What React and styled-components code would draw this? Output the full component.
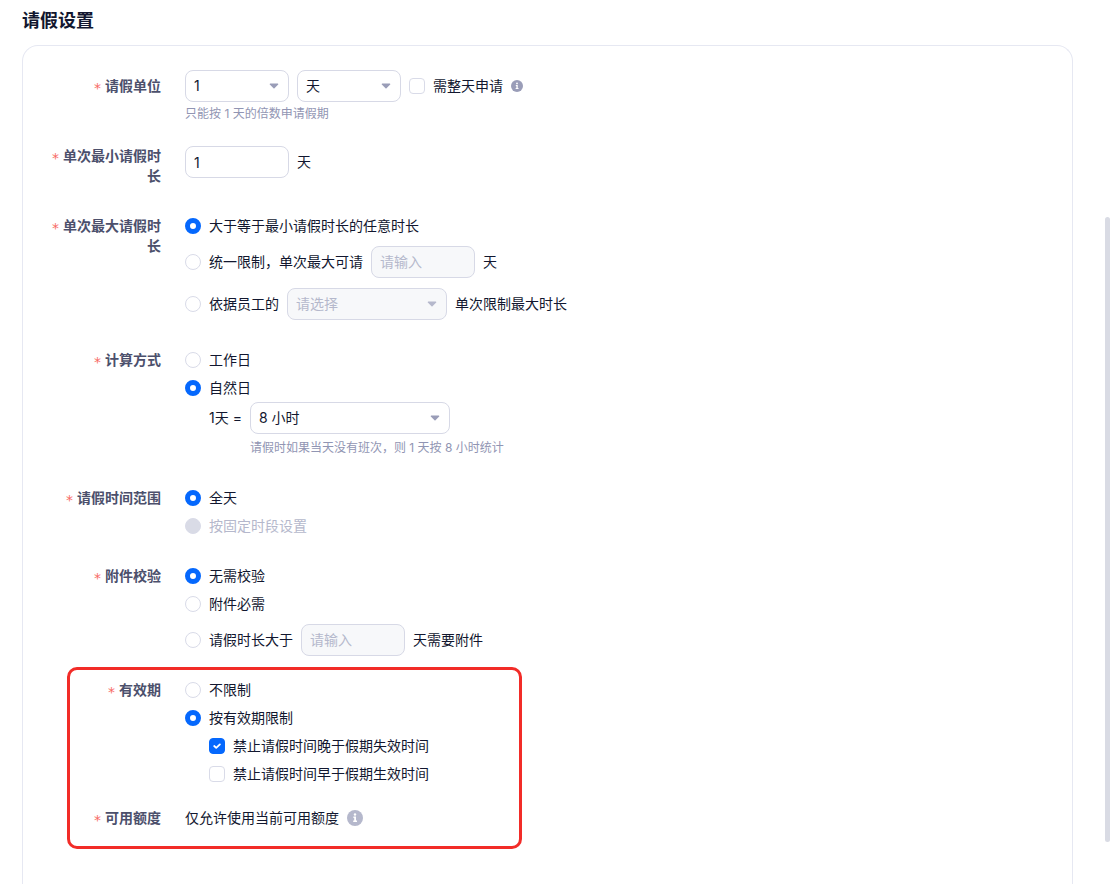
import React, { useState } from 'react';
import styled, { createGlobalStyle } from 'styled-components';

const GlobalStyle = createGlobalStyle`
  *, *::after {
    box-sizing: border-box;
  }
  body {
    margin: 0;
    background: #fff;
    color: #12172f;
    font-family: Inter, "Noto Sans CJK SC", sans-serif;
    font-size: 14px;
    line-height: 20px;
  }
  input, select {
    margin: 0;
    font: inherit;
    color: inherit;
  }
`;

const Page = styled.main`
  display: flex;
  flex-direction: column;
  height: 100vh;
  padding: 9px 37px 0 22px;
  overflow: hidden;
`;

const Title = styled.h1`
  margin: 0 0 12px;
  font-size: 18px;
  line-height: 24px;
  font-weight: 600;
`;

const Card = styled.form`
  flex: 1 0 auto;
  padding: 24px;
  border: 1px solid #e6e8f2;
  border-bottom: 0;
  border-radius: 16px 16px 0 0;
`;

const Row = styled.div`
  display: flex;
  align-items: flex-start;
  gap: 24px;
  margin-bottom: ${(props) => props.$space || 30}px;
`;

const RowLabel = styled.div`
  display: flex;
  align-items: center;
  justify-content: flex-end;
  flex: 0 0 114px;
  min-height: ${(props) => (props.$tall ? 32 : 20)}px;
  color: #4c506c;
  font-weight: 600;
  text-align: right;
`;

const Star = styled.span`
  margin-right: 4px;
  color: #f76964;
  font-family: "DejaVu Sans", sans-serif;
  font-size: 14px;
  font-weight: 400;
  line-height: 0;
  vertical-align: -2px;
`;

const Stack = styled.div`
  display: flex;
  flex-direction: column;
  gap: ${(props) => props.$gap || 8}px;
`;

const Line = styled.div`
  display: flex;
  align-items: center;
  gap: 8px;
  margin-top: ${(props) => (props.$field ? 2 : 0)}px;
`;

const Nested = styled.div`
  padding-left: 24px;
`;

const HoursGrid = styled(Nested)`
  display: grid;
  grid-template-columns: auto auto;
  justify-content: start;
  align-items: center;
  column-gap: 8px;
  row-gap: 4px;
`;

const Hint = styled.div`
  grid-column: 2;
  color: #9195b3;
  font-size: 12px;
`;

const Choice = styled.label`
  display: flex;
  align-items: center;
  gap: 8px;
  color: ${(props) => (props.$disabled ? '#b5b8cc' : 'inherit')};
`;

const RadioInput = styled.input.attrs({ type: 'radio' })`
  appearance: none;
  flex: none;
  width: 16px;
  height: 16px;
  border: 1px solid #d9dbe8;
  border-radius: 50%;
  background: #fff;
  &:checked {
    border: 5px solid #0568fd;
  }
  &:disabled {
    background: #d9dbe6;
  }
`;

const CheckInput = styled.input.attrs({ type: 'checkbox' })`
  appearance: none;
  grid-area: 1 / 1;
  width: 16px;
  height: 16px;
  border: 1px solid #d9dbe8;
  border-radius: 4px;
  background: #fff;
  &:checked {
    border-color: #0568fd;
    background: #0568fd;
  }
`;

const CheckBox = styled.span`
  display: grid;
  svg {
    grid-area: 1 / 1;
    pointer-events: none;
  }
`;

const TextInput = styled.input`
  width: 104px;
  height: 32px;
  padding: 0 8px;
  border: 1px solid #d7d9e6;
  border-radius: 8px;
  background: #fff;
  outline: 0;
  &::placeholder {
    color: #b5b8cc;
    opacity: 1;
  }
  &:placeholder-shown {
    padding-bottom: 2px;
  }
  &:disabled {
    background: #f7f8fa;
  }
`;

const SelectBox = styled.span`
  display: grid;
  align-items: center;
  width: ${(props) => props.$width || 104}px;
  svg {
    grid-area: 1 / 1;
    justify-self: end;
    margin-right: 10px;
    pointer-events: none;
  }
`;

const SelectInput = styled.select`
  appearance: none;
  grid-area: 1 / 1;
  width: 100%;
  height: 32px;
  padding: 0 24px 0 8px;
  border: 1px solid #d7d9e6;
  border-radius: 8px;
  background: #fff;
  outline: 0;
  &:disabled {
    background: #f7f8fa;
    color: #b5b8cc;
    opacity: 1;
  }
`;

const Highlight = styled.div`
  position: relative;
  &::after {
    content: '';
    position: absolute;
    top: -13px;
    bottom: -21px;
    left: 20px;
    width: 455px;
    border: 3px solid #f22c28;
    border-radius: 10px;
    pointer-events: none;
  }
`;

const ScrollThumb = styled.div`
  position: fixed;
  top: 217px;
  right: 0;
  bottom: 42px;
  width: 5px;
  border-radius: 3px;
  background: #d9dbe4;
`;

const InfoIcon = ({ size, color }) => (
  <svg width={size} height={size} viewBox="0 0 16 16" aria-hidden="true">
    <circle cx="8" cy="8" r="8" fill={color} />
    <circle cx="8" cy="4.5" r="1.2" fill="#fff" />
    <path d="M6.4 6.6H9v4h1v1.4H6.2v-1.4h1V8h-.8z" fill="#fff" />
  </svg>
);

const Select = ({ label, width, options, disabled }) => (
  <SelectBox $width={width}>
    <SelectInput aria-label={label} disabled={disabled}>
      {options.map((option) => (
        <option key={option}>{option}</option>
      ))}
    </SelectInput>
    <svg width="10" height="6" viewBox="0 0 10 6" aria-hidden="true">
      <path
        d="M1.2.5h7.6a.6.6 0 0 1 .4 1L5.5 5.2a.7.7 0 0 1-1 0L.8 1.5a.6.6 0 0 1 .4-1z"
        fill={disabled ? '#b5b8cc' : '#9a9db8'}
      />
    </svg>
  </SelectBox>
);

const Radio = ({ name, value, state, disabled, children }) => {
  const [current, setCurrent] = state;
  return (
    <Choice $disabled={disabled}>
      <RadioInput
        name={name}
        value={value}
        disabled={disabled}
        checked={current === value}
        onChange={() => setCurrent(value)}
      />
      {children}
    </Choice>
  );
};

const Check = ({ defaultChecked, children }) => {
  const [checked, setChecked] = useState(Boolean(defaultChecked));
  return (
    <Choice>
      <CheckBox>
        <CheckInput checked={checked} onChange={(e) => setChecked(e.target.checked)} />
        {checked && (
          <svg width="16" height="16" viewBox="0 0 16 16" aria-hidden="true">
            <path
              d="M5.2 8l2 1.9L10.9 6.4"
              fill="none"
              stroke="#fff"
              strokeWidth="1.8"
              strokeLinecap="round"
              strokeLinejoin="round"
            />
          </svg>
        )}
      </CheckBox>
      {children}
    </Choice>
  );
};

const FormRow = ({ id, label, htmlFor, tall, space, children }) => (
  <Row $space={space} role="group" aria-labelledby={id}>
    <RowLabel $tall={tall}>
      <label id={id} htmlFor={htmlFor}>
        <Star>*</Star>
        {label}
      </label>
    </RowLabel>
    {children}
  </Row>
);

const App = () => {
  const maxDuration = useState('any');
  const method = useState('natural');
  const range = useState('full');
  const attachment = useState('none');
  const validity = useState('limited');

  return (
    <>
      <GlobalStyle />
      <Page>
        <Title>请假设置</Title>
        <Card>
          <FormRow id="unit" label="请假单位" tall space={22}>
            <Stack $gap={2}>
              <Line>
                <Select label="数量" options={['1', '2']} />
                <Select label="单位" options={['天', '小时']} />
                <Check>需整天申请</Check>
                <InfoIcon size={12} color="#9a9db8" />
              </Line>
              <Hint>只能按 1 天的倍数申请假期</Hint>
            </Stack>
          </FormRow>

          <FormRow id="min" label="单次最小请假时长" htmlFor="min-input" tall>
            <Line>
              <TextInput id="min-input" defaultValue="1" />
              天
            </Line>
          </FormRow>

          <FormRow id="max" label="单次最大请假时长">
            <Stack>
              <Radio name="max" value="any" state={maxDuration}>大于等于最小请假时长的任意时长</Radio>
              <Line $field>
                <Radio name="max" value="fixed" state={maxDuration}>统一限制，单次最大可请</Radio>
                <TextInput aria-label="单次最大可请" placeholder="请输入" disabled />
                天
              </Line>
              <Line $field>
                <Radio name="max" value="employee" state={maxDuration}>依据员工的</Radio>
                <Select label="依据员工的" width={160} options={['请选择']} disabled />
                单次限制最大时长
              </Line>
            </Stack>
          </FormRow>

          <FormRow id="method" label="计算方式">
            <Stack>
              <Radio name="method" value="work" state={method}>工作日</Radio>
              <Stack $gap={4}>
                <Radio name="method" value="natural" state={method}>自然日</Radio>
                <HoursGrid>
                  <span>1天 =</span>
                  <Select label="1天" width={200} options={['8 小时', '7 小时']} />
                  <Hint>请假时如果当天没有班次，则 1 天按 8 小时统计</Hint>
                </HoursGrid>
              </Stack>
            </Stack>
          </FormRow>

          <FormRow id="range" label="请假时间范围">
            <Stack>
              <Radio name="range" value="full" state={range}>全天</Radio>
              <Radio name="range" value="period" state={range} disabled>按固定时段设置</Radio>
            </Stack>
          </FormRow>

          <FormRow id="attachment" label="附件校验" space={24}>
            <Stack>
              <Radio name="attachment" value="none" state={attachment}>无需校验</Radio>
              <Radio name="attachment" value="always" state={attachment}>附件必需</Radio>
              <Line $field>
                <Radio name="attachment" value="over" state={attachment}>请假时长大于</Radio>
                <TextInput aria-label="请假时长大于" placeholder="请输入" disabled />
                天需要附件
              </Line>
            </Stack>
          </FormRow>

          <Highlight>
            <FormRow id="validity" label="有效期" space={24}>
              <Stack>
                <Radio name="validity" value="none" state={validity}>不限制</Radio>
                <Radio name="validity" value="limited" state={validity}>按有效期限制</Radio>
                <Nested>
                  <Stack>
                    <Check defaultChecked>禁止请假时间晚于假期失效时间</Check>
                    <Check>禁止请假时间早于假期生效时间</Check>
                  </Stack>
                </Nested>
              </Stack>
            </FormRow>
            <FormRow id="quota" label="可用额度" space="0">
              <Line>
                仅允许使用当前可用额度
                <InfoIcon size={16} color="#b5b8cc" />
              </Line>
            </FormRow>
          </Highlight>
        </Card>
      </Page>
      <ScrollThumb />
    </>
  );
};

export default App;
